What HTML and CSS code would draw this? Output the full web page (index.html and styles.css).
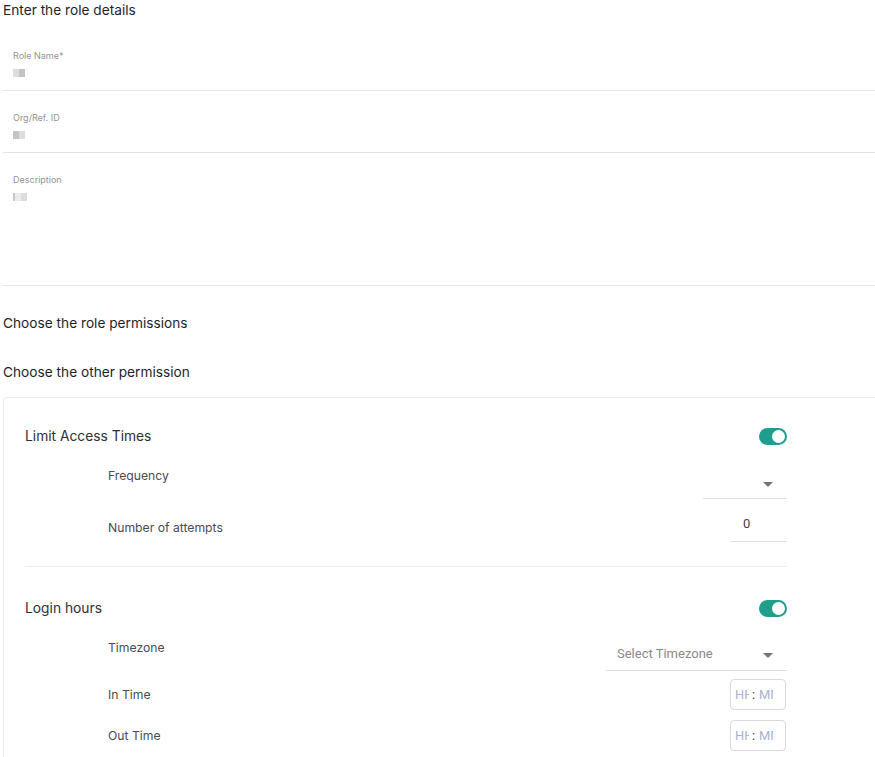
FILE: index.html
```html
<!DOCTYPE html>
<html lang="en">
<head>
    <meta charset="UTF-8">
    <meta name="viewport" content="width=device-width, initial-scale=1.0">
    <title>Role details</title>
    <link rel="stylesheet" href="styles.css">
</head>
<body>

<div class="page">
    <h2 class="section-title">Enter the role details</h2>

    <div class="field">
        <label class="field-label">Role Name*</label>
        <div class="field-value"><span class="blur b1"></span><span class="blur b2"></span></div>
    </div>
    <div class="field">
        <label class="field-label">Org/Ref. ID</label>
        <div class="field-value"><span class="blur b2"></span><span class="blur b1"></span></div>
    </div>
    <div class="field field-area">
        <label class="field-label">Description</label>
        <div class="field-value"><span class="blur b3"></span><span class="blur b1"></span></div>
    </div>

    <h2 class="section-title perm-title">Choose the role permissions</h2>
    <h2 class="section-title other-title">Choose the other permission</h2>

    <div class="perm-card">
        <div class="perm-section">
            <div class="perm-head">
                <span>Limit Access Times</span>
                <span class="toggle"></span>
            </div>
            <div class="perm-row row-frequency">
                <span class="perm-label">Frequency</span>
                <div class="select select-short"><span class="select-text"></span><span class="caret"></span></div>
            </div>
            <div class="perm-row row-attempts">
                <span class="perm-label">Number of attempts</span>
                <div class="number-input">0</div>
            </div>
        </div>

        <div class="perm-section login">
            <div class="perm-head">
                <span>Login hours</span>
                <span class="toggle"></span>
            </div>
            <div class="perm-row row-timezone">
                <span class="perm-label">Timezone</span>
                <div class="select select-wide"><span class="select-text">Select Timezone</span><span class="caret"></span></div>
            </div>
            <div class="perm-row row-time">
                <span class="perm-label">In Time</span>
                <div class="time-input"><span class="seg">HH</span><span class="colon">:</span><span class="seg">MM</span></div>
            </div>
            <div class="perm-row row-time">
                <span class="perm-label">Out Time</span>
                <div class="time-input"><span class="seg">HH</span><span class="colon">:</span><span class="seg">MM</span></div>
            </div>
        </div>
    </div>
</div>

</body>
</html>
```

FILE: styles.css
```css
body {
    margin: 0;
    padding: 0;
    background-color: #fff;
    font-family: 'Inter', 'Roboto', sans-serif;
    overflow: hidden;
}
.page {
    padding: 0 0 0 3px;
}
.section-title {
    margin: 0;
    font-size: 13.7px;
    line-height: 20px;
    font-weight: 400;
    color: #1e1e2a;
}
.field {
    padding: 21px 10px 12px;
    border-bottom: 1px solid #e4e4e4;
}
.page > .section-title + .field {
    margin-top: 9px;
}
.field-label {
    display: block;
    font-size: 9px;
    line-height: 12px;
    color: #949494;
}
.field-value {
    display: flex;
    margin-top: 6px;
    height: 10px;
}
.blur {
    display: inline-block;
    width: 6px;
    height: 8px;
    margin-top: 1px;
}
.b1 { background-color: #dcdcdc; }
.b2 { background-color: #c4c4c4; }
.b3 { background-color: #ececec; border-left: 2px solid #c8c8c8; }
.field-area {
    padding-bottom: 83px;
}
.perm-title {
    margin-top: 27px;
}
.other-title {
    margin-top: 29px;
}
.perm-card {
    margin-top: 15px;
    margin-right: -20px;
    border: 1px solid #ececec;
    border-radius: 4px;
    padding: 28px 0 40px 21px;
}
.perm-section {
    width: 762px;
}
.perm-section.login {
    margin-top: 24px;
    border-top: 1px solid #efefef;
    padding-top: 31px;
}
.perm-head {
    display: flex;
    justify-content: space-between;
    align-items: center;
    height: 20px;
    font-size: 13.8px;
    color: #2e2e3a;
}
.toggle {
    position: relative;
    width: 28px;
    height: 17px;
    border-radius: 9px;
    background-color: #1f9e8b;
}
.toggle::after {
    content: '';
    position: absolute;
    right: 2px;
    top: 2px;
    width: 13px;
    height: 13px;
    border-radius: 50%;
    background-color: #fff;
}
.perm-row {
    display: flex;
    justify-content: space-between;
    padding-left: 83px;
}
.perm-label {
    font-size: 12.2px;
    line-height: 16px;
    color: #4a4a55;
}
.row-frequency {
    margin-top: 22px;
    align-items: flex-start;
}
.select {
    display: flex;
    align-items: center;
    justify-content: space-between;
    height: 30px;
    border-bottom: 1px solid #e0e0e0;
    padding: 0 14px 0 11px;
    box-sizing: content-box;
    font-family: 'Roboto', sans-serif;
    font-size: 13px;
    color: #8a8a8a;
}
.select-short {
    width: 59px;
}
.select-wide {
    width: 156px;
    height: 32px;
}
.select-text {
    padding-bottom: 2px;
}
.caret {
    width: 0;
    height: 0;
    border-left: 5px solid transparent;
    border-right: 5px solid transparent;
    border-top: 5px solid #757575;
    margin-top: 2px;
}
.row-attempts {
    margin-top: 11px;
    align-items: center;
}
.row-attempts .perm-label {
    padding-top: 3px;
}
.number-input {
    width: 56px;
    height: 31px;
    line-height: 27px;
    border-bottom: 1px solid #e0e0e0;
    text-indent: 12px;
    font-family: 'Roboto', sans-serif;
    font-size: 13px;
    color: #444;
}
.row-timezone {
    margin-top: 20px;
    align-items: flex-start;
}
.row-timezone .perm-label {
    margin-top: 2px;
}
.row-time {
    margin-top: 8px;
    align-items: center;
}
.row-time + .row-time {
    margin-top: 10px;
}
.time-input {
    display: flex;
    align-items: center;
    box-sizing: border-box;
    width: 56px;
    height: 31px;
    margin-right: 1px;
    padding-left: 4px;
    border: 1px solid #d9d9de;
    border-radius: 4px;
    overflow: hidden;
    font-family: 'Roboto', sans-serif;
    font-size: 12.8px;
    color: #a8b3cc;
}
.seg {
    display: inline-block;
    width: 14px;
    overflow: hidden;
    white-space: nowrap;
}
.colon {
    color: #4a2a2a;
    margin: 0 4px 0 3px;
}
```
